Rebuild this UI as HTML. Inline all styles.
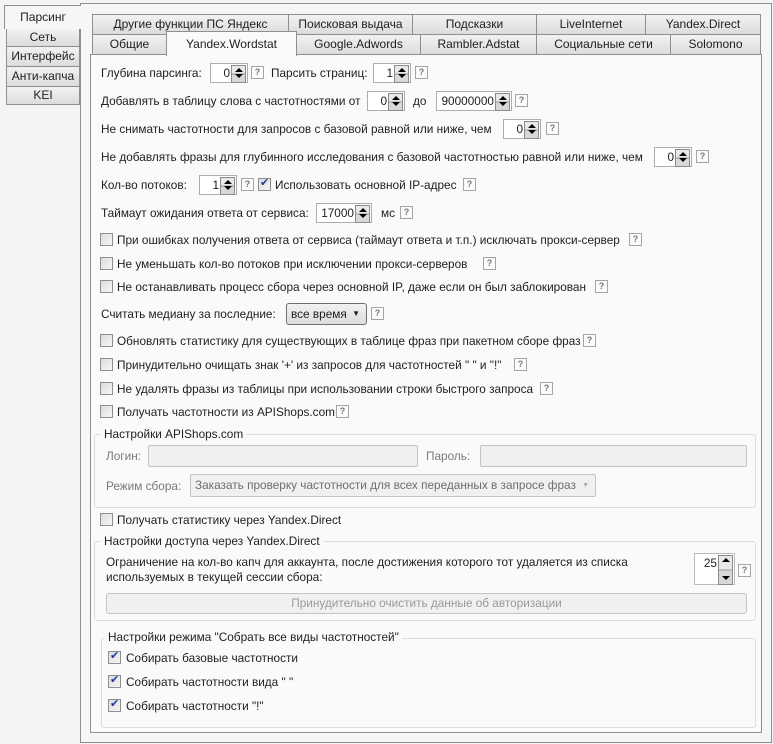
<!DOCTYPE html>
<html><head><meta charset="utf-8"><style>
*{box-sizing:border-box;margin:0;padding:0}
body{width:773px;height:744px;background:#f4f4f4;font:11.8px "Liberation Sans",sans-serif;color:#1e1e1e;position:relative;overflow:hidden}
.a{position:absolute;white-space:nowrap}
.tab{position:absolute;border:1px solid #8e8f8f;background:linear-gradient(#f2f2f2,#dcdcdc);text-align:center;font-size:12px;line-height:18px}
.sel{background:#fafafa;border-bottom:none}
.sp{position:absolute;height:20px;border:1px solid #abadb3;background:#fff;text-align:right;padding-right:17px;line-height:18px}
.sp:after{content:"";position:absolute;right:1px;top:1px;width:13px;height:calc(100% - 2px);background:linear-gradient(#e8e8e8 0,#e8e8e8 48%,#999 48%,#999 52%,#d8d8d8 52%);border:1px solid #8a8a8a}
.sp b{position:absolute;right:4px;width:0;height:0;border-left:4px solid transparent;border-right:4px solid transparent;z-index:2}
.sp b.u{top:4px;border-bottom:4px solid #000}
.sp b.d{bottom:4px;border-top:4px solid #000}
.q{position:absolute;width:13px;height:13px;border:1px solid #a5a5a5;background:#fbfbfb;color:#777;font-size:9px;line-height:11px;text-align:center;font-weight:bold}
.cb{position:absolute;width:13px;height:13px;border:1px solid #8e8f8f;background:linear-gradient(135deg,#dcdcdc,#f6f6f6)}
.cb.c:after{content:"✔";position:absolute;left:1px;top:-3px;font-size:11px;color:#2a3b8f}
.grp{position:absolute;border:1px solid #d5dfe5;border-radius:3px}
.gl{position:absolute;background:#fafafa;padding:0 3px}
.in{position:absolute;border:1px solid #c4c4c4;background:#f0f0f0;border-radius:2px}
.g{color:#7a7a7a}
</style></head><body>
<div class="a" style="left:80px;top:3px;width:692px;height:740px;border:1px solid #8e8f8f;background:#f6f6f6"></div>
<div class="tab sel" style="left:4px;top:5px;width:77px;height:24px;border-bottom:none;border-right:none;background:#f6f6f6;line-height:22px;z-index:2">Парсинг</div>
<div class="tab" style="left:6px;top:28px;width:74px;height:19px;line-height:16px">Сеть</div>
<div class="tab" style="left:6px;top:46px;width:74px;height:21px">Интерфейс</div>
<div class="tab" style="left:6px;top:66px;width:74px;height:21px">Анти-капча</div>
<div class="tab" style="left:6px;top:86px;width:74px;height:19px;line-height:16px">KEI</div>
<div class="tab" style="left:92px;top:14px;width:197px;height:21px">Другие функции ПС Яндекс</div>
<div class="tab" style="left:288px;top:14px;width:125px;height:21px">Поисковая выдача</div>
<div class="tab" style="left:412px;top:14px;width:125px;height:21px">Подсказки</div>
<div class="tab" style="left:536px;top:14px;width:110px;height:21px">LiveInternet</div>
<div class="tab" style="left:645px;top:14px;width:116px;height:21px">Yandex.Direct</div>
<div class="a" style="left:90px;top:54px;width:672px;height:679px;border:1px solid #8e8f8f;background:#fafafa"></div>
<div class="tab" style="left:92px;top:34px;width:75px;height:21px">Общие</div>
<div class="tab" style="left:296px;top:34px;width:125px;height:21px">Google.Adwords</div>
<div class="tab" style="left:420px;top:34px;width:117px;height:21px">Rambler.Adstat</div>
<div class="tab" style="left:536px;top:34px;width:135px;height:21px">Социальные сети</div>
<div class="tab" style="left:670px;top:34px;width:91px;height:21px">Solomono</div>
<div class="tab sel" style="left:166px;top:31px;width:131px;height:25px;line-height:24px;z-index:2">Yandex.Wordstat</div>

<div class="a" style="left:101px;top:66px">Глубина парсинга:</div>
<div class="sp" style="left:210px;top:63px;width:38px">0<b class="u"></b><b class="d"></b></div>
<div class="q" style="left:251px;top:66px">?</div>
<div class="a" style="left:271px;top:66px">Парсить страниц:</div>
<div class="sp" style="left:373px;top:63px;width:38px">1<b class="u"></b><b class="d"></b></div>
<div class="q" style="left:415px;top:66px">?</div>

<div class="a" style="left:101px;top:94px">Добавлять в таблицу слова с частотностями от</div>
<div class="sp" style="left:367px;top:91px;width:38px">0<b class="u"></b><b class="d"></b></div>
<div class="a" style="left:413px;top:94px">до</div>
<div class="sp" style="left:436px;top:91px;width:76px">90000000<b class="u"></b><b class="d"></b></div>
<div class="q" style="left:515px;top:94px">?</div>

<div class="a" style="left:101px;top:122px">Не снимать частотности для запросов с базовой равной или ниже, чем</div>
<div class="sp" style="left:503px;top:119px;width:38px">0<b class="u"></b><b class="d"></b></div>
<div class="q" style="left:546px;top:122px">?</div>

<div class="a" style="left:101px;top:150px">Не добавлять фразы для глубинного исследования с базовой частотностью равной или ниже, чем</div>
<div class="sp" style="left:654px;top:147px;width:38px">0<b class="u"></b><b class="d"></b></div>
<div class="q" style="left:696px;top:150px">?</div>

<div class="a" style="left:101px;top:178px">Кол-во потоков:</div>
<div class="sp" style="left:199px;top:175px;width:38px">1<b class="u"></b><b class="d"></b></div>
<div class="q" style="left:241px;top:178px">?</div>
<div class="cb c" style="left:258px;top:178px"></div>
<div class="a" style="left:275px;top:178px">Использовать основной IP-адрес</div>
<div class="q" style="left:463px;top:178px">?</div>

<div class="a" style="left:101px;top:206px">Таймаут ожидания ответа от сервиса:</div>
<div class="sp" style="left:316px;top:203px;width:56px">17000<b class="u"></b><b class="d"></b></div>
<div class="a" style="left:381px;top:206px">мс</div>
<div class="q" style="left:400px;top:206px">?</div>

<div class="cb" style="left:100px;top:233px"></div>
<div class="a" style="left:117px;top:233px">При ошибках получения ответа от сервиса (таймаут ответа и т.п.) исключать прокси-сервер</div>
<div class="q" style="left:629px;top:233px">?</div>
<div class="cb" style="left:100px;top:257px"></div>
<div class="a" style="left:117px;top:257px">Не уменьшать кол-во потоков при исключении прокси-серверов</div>
<div class="q" style="left:483px;top:257px">?</div>
<div class="cb" style="left:100px;top:280px"></div>
<div class="a" style="left:117px;top:280px">Не останавливать процесс сбора через основной IP, даже если он был заблокирован</div>
<div class="q" style="left:595px;top:280px">?</div>

<div class="a" style="left:101px;top:307px">Считать медиану за последние:</div>
<div class="a" style="left:286px;top:303px;width:81px;height:22px;border:1px solid #707070;border-radius:3px;background:linear-gradient(#f2f2f2,#dcdcdc);padding-left:4px;line-height:20px">все время<span style="position:absolute;right:6px;font-size:8px">▼</span></div>
<div class="q" style="left:371px;top:307px">?</div>

<div class="cb" style="left:100px;top:334px"></div>
<div class="a" style="left:117px;top:334px">Обновлять статистику для существующих в таблице фраз при пакетном сборе фраз</div>
<div class="q" style="left:583px;top:334px">?</div>
<div class="cb" style="left:100px;top:358px"></div>
<div class="a" style="left:117px;top:358px">Принудительно очищать знак '+' из запросов для частотностей " " и "!"</div>
<div class="q" style="left:514px;top:358px">?</div>
<div class="cb" style="left:100px;top:382px"></div>
<div class="a" style="left:117px;top:382px">Не удалять фразы из таблицы при использовании строки быстрого запроса</div>
<div class="q" style="left:540px;top:382px">?</div>
<div class="cb" style="left:100px;top:405px"></div>
<div class="a" style="left:117px;top:405px">Получать частотности из APIShops.com</div>
<div class="q" style="left:336px;top:405px">?</div>

<div class="grp" style="left:94px;top:434px;width:662px;height:74px"></div>
<div class="gl" style="left:101px;top:427px">Настройки APIShops.com</div>
<div class="a g" style="left:106px;top:449px">Логин:</div>
<div class="in" style="left:148px;top:445px;width:270px;height:22px"></div>
<div class="a g" style="left:426px;top:449px">Пароль:</div>
<div class="in" style="left:480px;top:445px;width:267px;height:22px"></div>
<div class="a g" style="left:106px;top:479px">Режим сбора:</div>
<div class="in" style="left:190px;top:474px;width:406px;height:23px;padding-left:4px;line-height:21px;color:#6d6d6d">Заказать проверку частотности для всех переданных в запросе фраз<span style="position:absolute;right:6px;font-size:7px;color:#aaa">▼</span></div>

<div class="cb" style="left:100px;top:513px"></div>
<div class="a" style="left:117px;top:513px">Получать статистику через Yandex.Direct</div>

<div class="grp" style="left:94px;top:541px;width:662px;height:80px"></div>
<div class="gl" style="left:101px;top:534px">Настройки доступа через Yandex.Direct</div>
<div class="a" style="left:106px;top:555px">Ограничение на кол-во капч для аккаунта, после достижения которого тот удаляется из списка</div>
<div class="a" style="left:106px;top:570px">используемых в текущей сессии сбора:</div>
<div class="sp" style="left:694px;top:553px;width:41px;height:32px;line-height:18px;border-color:#bbb">25<b class="u"></b><b class="d"></b></div>
<div class="q" style="left:738px;top:564px">?</div>
<div class="a" style="left:106px;top:593px;width:641px;height:21px;border:1px solid #c4c4c4;border-radius:3px;background:#f0f0f0;color:#9a9a9a;text-align:center;line-height:19px">Принудительно очистить данные об авторизации</div>

<div class="grp" style="left:101px;top:638px;width:655px;height:90px"></div>
<div class="gl" style="left:105px;top:630px">Настройки режима "Собрать все виды частотностей"</div>
<div class="cb c" style="left:108px;top:651px"></div>
<div class="a" style="left:126px;top:651px">Собирать базовые частотности</div>
<div class="cb c" style="left:108px;top:675px"></div>
<div class="a" style="left:126px;top:675px">Собирать частотности вида " "</div>
<div class="cb c" style="left:108px;top:699px"></div>
<div class="a" style="left:126px;top:699px">Собирать частотности "!"</div>
</body></html>
